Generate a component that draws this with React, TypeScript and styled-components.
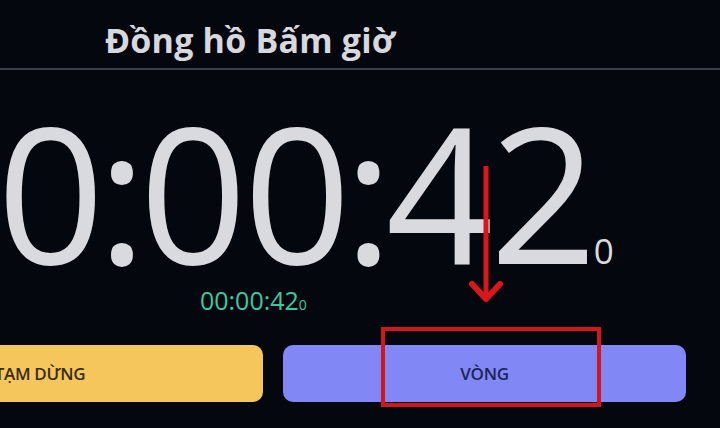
import React from "react";
import styled, { createGlobalStyle } from "styled-components";

const GlobalStyle = createGlobalStyle`
  html, body {
    margin: 0;
    padding: 0;
    background: #05070e;
    overflow: hidden;
  }
  * { box-sizing: border-box; }
`;

const Page = styled.div`
  position: relative;
  width: 720px;
  height: 428px;
  overflow: hidden;
  background: #05070e;
  display: flex;
  flex-direction: column;
  font-family: "Open Sans", "Noto Sans", "DejaVu Sans", sans-serif;
  & > * { flex-shrink: 0; }
`;

const Header = styled.header`
  height: 70px;
  padding: 23px 0 0 105px;
  border-bottom: 2px solid #3b3e46;
`;

const Title = styled.h1`
  margin: 0;
  font-size: 34px;
  line-height: 1;
  font-weight: 700;
  color: #d7d8dd;
  letter-spacing: 0.2px;
`;

const ClockBlock = styled.section`
  align-self: flex-start;
  margin: 27px 0 0 -107px;
  display: flex;
  flex-direction: column;
  align-items: center;
`;

const BigTime = styled.div`
  font-size: 188px;
  line-height: 188px;
  font-weight: 400;
  letter-spacing: -3.5px;
  color: #d9dadf;
  white-space: nowrap;
`;

const Colon = styled.span`
  margin: 0 -3.75px;
`;

const Tail = styled.span<{ $size: number }>`
  font-size: ${(p) => p.$size}px;
  line-height: 1;
  letter-spacing: 0;
`;

const SmallTime = styled.div`
  margin-top: 3px;
  font-size: 25px;
  line-height: 25px;
  font-weight: 400;
  color: #3cc9a1;
  white-space: nowrap;
`;

const ButtonRow = styled.div`
  align-self: flex-start;
  margin: 32px 0 0 -183px;
  display: flex;
  gap: 20px;
`;

const ActionButton = styled.button<{ $tone: "pause" | "lap"; $width: number }>`
  flex-shrink: 0;
  width: ${(p) => p.$width}px;
  height: 57px;
  border: none;
  border-radius: 10px;
  font-family: inherit;
  font-size: 17px;
  font-weight: 600;
  letter-spacing: -0.3px;
  background: ${(p) => (p.$tone === "pause" ? "#f5c65b" : "#8188f6")};
  color: ${(p) => (p.$tone === "pause" ? "#3a2c0e" : "#1d2558")};
`;

const Annotation = styled.svg`
  position: absolute;
  top: 0;
  left: 0;
  pointer-events: none;
`;

export default function App() {
  return (
    <>
      <GlobalStyle />
      <Page>
        <Header>
          <Title>Đồng hồ Bấm giờ</Title>
        </Header>
        <ClockBlock>
          <BigTime>
            00<Colon>:</Colon>00<Colon>:</Colon>42<Tail $size={35}>0</Tail>
          </BigTime>
          <SmallTime>
            00:00:42<Tail $size={14}>0</Tail>
          </SmallTime>
        </ClockBlock>
        <ButtonRow>
          <ActionButton $tone="pause" $width={446}>TẠM DỪNG</ActionButton>
          <ActionButton $tone="lap" $width={403}>VÒNG</ActionButton>
        </ButtonRow>
        <Annotation width={720} height={428} viewBox="0 0 720 428">
          <line x1={486} y1={166} x2={486} y2={297} stroke="#d8161c" strokeWidth={5} />
          <polyline
            points="472,284 486,299 500,284"
            fill="none"
            stroke="#d8161c"
            strokeWidth={6}
            strokeLinecap="round"
            strokeLinejoin="round"
          />
          <rect x={383} y={329} width={216} height={76} fill="none" stroke="#d3161c" strokeWidth={4} />
        </Annotation>
      </Page>
    </>
  );
}
